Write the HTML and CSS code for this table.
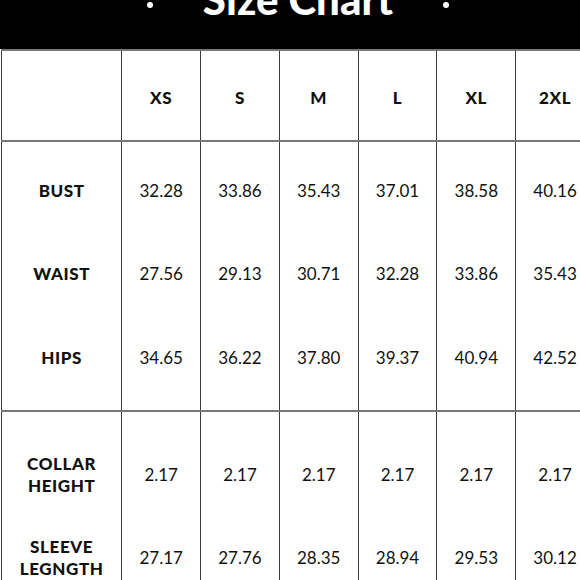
FILE: index.html
```html
<!DOCTYPE html>
<html lang="en">
<head>
<meta charset="utf-8">
<title>Size Chart</title>
<link rel="stylesheet" href="styles.css">
</head>
<body>
<header class="banner">
  <span class="dot"></span>
  <h1 class="title">Size Chart</h1>
  <span class="dot"></span>
</header>
<table class="chart">
  <colgroup>
    <col class="col-label">
    <col class="col-size"><col class="col-size"><col class="col-size">
    <col class="col-size"><col class="col-size"><col class="col-size">
  </colgroup>
  <thead>
    <tr class="head-row">
      <th></th><th>XS</th><th>S</th><th>M</th><th>L</th><th>XL</th><th>2XL</th>
    </tr>
  </thead>
  <tbody class="group group-body">
    <tr class="first">
      <th>BUST</th><td>32.28</td><td>33.86</td><td>35.43</td><td>37.01</td><td>38.58</td><td>40.16</td>
    </tr>
    <tr>
      <th>WAIST</th><td>27.56</td><td>29.13</td><td>30.71</td><td>32.28</td><td>33.86</td><td>35.43</td>
    </tr>
    <tr class="last">
      <th>HIPS</th><td>34.65</td><td>36.22</td><td>37.80</td><td>39.37</td><td>40.94</td><td>42.52</td>
    </tr>
  </tbody>
  <tbody class="group group-extra">
    <tr class="first">
      <th>COLLAR<br>HEIGHT</th><td>2.17</td><td>2.17</td><td>2.17</td><td>2.17</td><td>2.17</td><td>2.17</td>
    </tr>
    <tr>
      <th>SLEEVE<br>LEGNGTH</th><td>27.17</td><td>27.76</td><td>28.35</td><td>28.94</td><td>29.53</td><td>30.12</td>
    </tr>
  </tbody>
</table>
</body>
</html>
```
FILE: styles.css
```css
html, body {
  margin: 0;
  padding: 0;
  background: #ffffff;
  overflow: hidden;
}
body {
  width: 580px;
  height: 580px;
  font-family: Lato, "Open Sans", sans-serif;
  color: #111111;
}
.banner {
  height: 49px;
  background: #000000;
  display: flex;
  justify-content: center;
  align-items: flex-start;
  gap: 50px;
  padding-left: 16px;
  overflow: hidden;
}
.title {
  margin: -22px 0 0 0;
  font-size: 42px;
  line-height: 42px;
  font-weight: 900;
  color: #ffffff;
  letter-spacing: 0;
}
.dot {
  width: 6px;
  height: 6px;
  border-radius: 50%;
  background: #ffffff;
  margin-top: 2px;
}
.chart {
  border-collapse: collapse;
  table-layout: fixed;
  width: 594px;
  margin-left: 1px;
}
.col-label { width: 120px; }
.col-size { width: 78.6px; }
.chart th,
.chart td {
  box-sizing: border-box;
  border-left: 1px solid #3a3a3a;
  border-right: 1px solid #3a3a3a;
  text-align: center;
  vertical-align: middle;
  padding: 0;
  line-height: 22px;
}
.chart td {
  font-size: 17px;
  font-weight: 400;
}
.chart th {
  font-size: 17px;
  font-weight: 900;
  letter-spacing: 0.6px;
}
.head-row th {
  height: 91px;
  border-top: 2px solid #777777;
  border-bottom: 2px solid #777777;
  padding-top: 4px;
}
.group-body tr td,
.group-body tr th {
  height: 84px;
}
.group-body tr.first td,
.group-body tr.first th {
  padding-top: 7px;
  height: 91px;
}
.group-body tr.last td,
.group-body tr.last th {
  padding-bottom: 11px;
  height: 95px;
  border-bottom: 2px solid #777777;
}
.group-extra tr td,
.group-extra tr th {
  height: 84px;
}
.group-extra tr.first td,
.group-extra tr.first th {
  padding-top: 21px;
  height: 105px;
}
```
